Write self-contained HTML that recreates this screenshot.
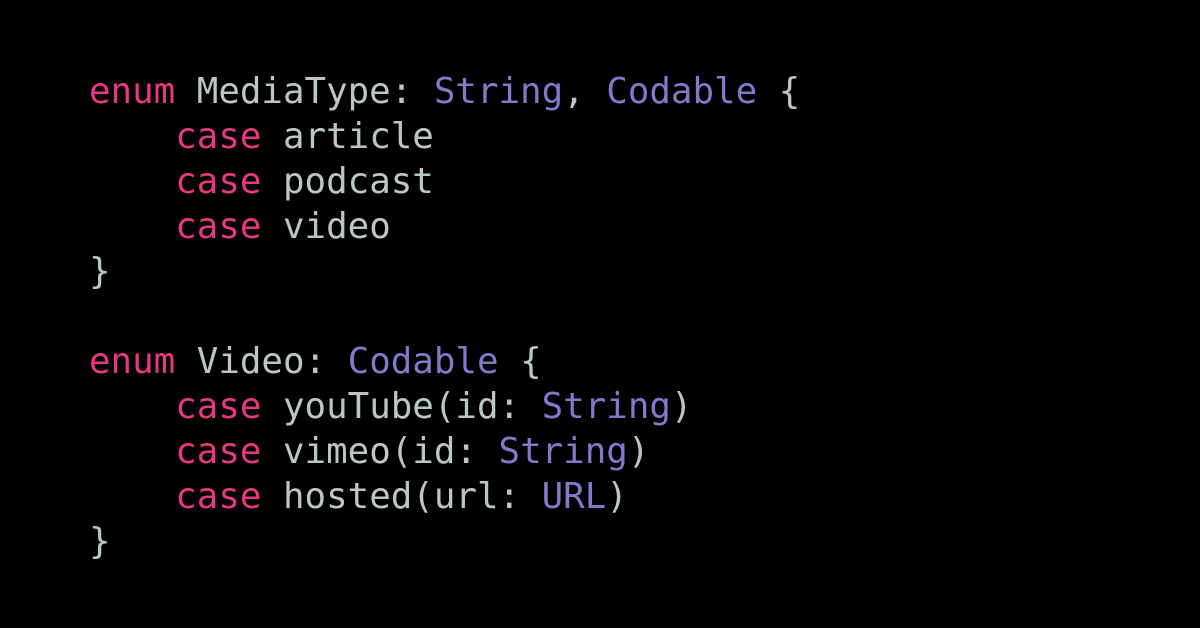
<!DOCTYPE html>
<html><head><style>
html,body{margin:0;padding:0;background:#000;width:1200px;height:628px;overflow:hidden}
pre{position:absolute;left:89px;top:69px;margin:0;font-family:"DejaVu Sans Mono","Liberation Mono",monospace;font-size:35.8px;line-height:45px;color:#b9c8c5}
.k{color:#e5387f}.t{color:#8179c9}
</style></head><body>
<pre><span class="k">enum</span> MediaType: <span class="t">String</span>, <span class="t">Codable</span> {
    <span class="k">case</span> article
    <span class="k">case</span> podcast
    <span class="k">case</span> video
}

<span class="k">enum</span> Video: <span class="t">Codable</span> {
    <span class="k">case</span> youTube(id: <span class="t">String</span>)
    <span class="k">case</span> vimeo(id: <span class="t">String</span>)
    <span class="k">case</span> hosted(url: <span class="t">URL</span>)
}</pre>
</body></html>
